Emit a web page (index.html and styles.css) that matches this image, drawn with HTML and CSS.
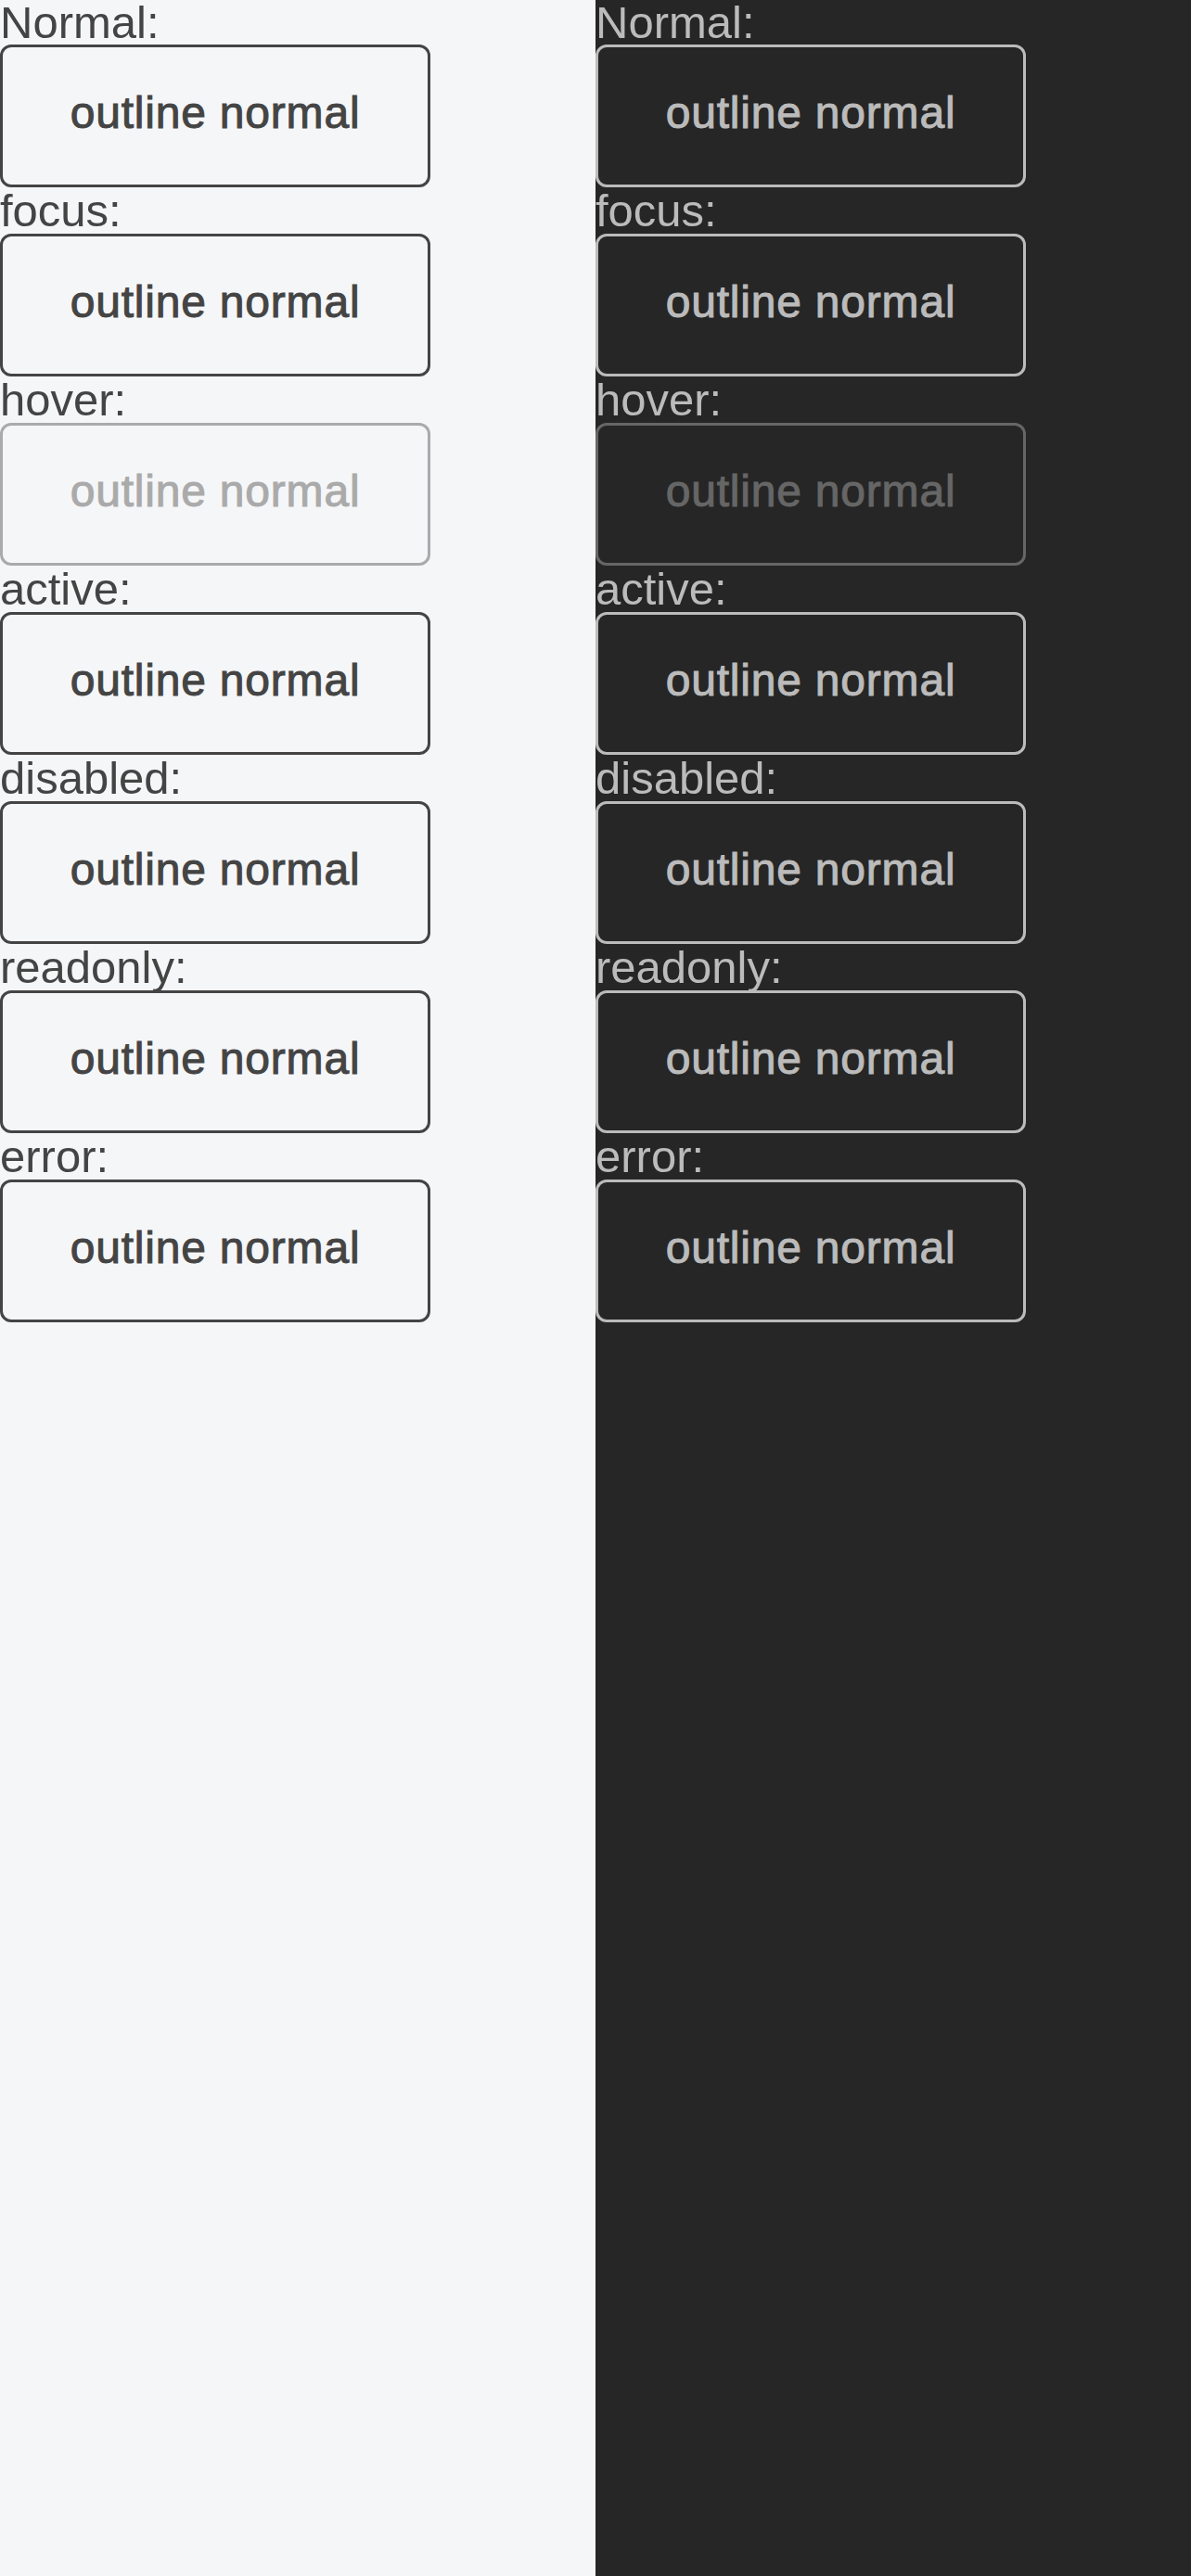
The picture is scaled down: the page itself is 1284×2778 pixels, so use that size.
FILE: index.html
```html
<!DOCTYPE html>
<html lang="en">
<head>
<meta charset="utf-8">
<title>Outline buttons</title>
<link rel="stylesheet" href="styles.css">
</head>
<body>
<div class="page">
  <section class="col light">
    <div class="label">Normal:</div>
    <div class="btn">outline normal</div>
    <div class="label">focus:</div>
    <div class="btn">outline normal</div>
    <div class="label">hover:</div>
    <div class="btn hover">outline normal</div>
    <div class="label">active:</div>
    <div class="btn">outline normal</div>
    <div class="label">disabled:</div>
    <div class="btn">outline normal</div>
    <div class="label">readonly:</div>
    <div class="btn">outline normal</div>
    <div class="label">error:</div>
    <div class="btn">outline normal</div>
  </section>
  <section class="col dark">
    <div class="label">Normal:</div>
    <div class="btn">outline normal</div>
    <div class="label">focus:</div>
    <div class="btn">outline normal</div>
    <div class="label">hover:</div>
    <div class="btn hover">outline normal</div>
    <div class="label">active:</div>
    <div class="btn">outline normal</div>
    <div class="label">disabled:</div>
    <div class="btn">outline normal</div>
    <div class="label">readonly:</div>
    <div class="btn">outline normal</div>
    <div class="label">error:</div>
    <div class="btn">outline normal</div>
  </section>
</div>
</body>
</html>
```
FILE: styles.css
```css
html, body {
  margin: 0;
  padding: 0;
}
body {
  font-family: "Liberation Sans", Arial, sans-serif;
}
.page {
  display: flex;
  width: 1284px;
  height: 2778px;
}
.col {
  width: 642px;
  display: flex;
  flex-direction: column;
  align-items: flex-start;
}
.light {
  background: #f5f6f8;
  --fg: #444444;
  --muted: #aaaaaa;
}
.dark {
  background: #262626;
  --fg: #bbbbbb;
  --muted: #666666;
}
.label {
  height: 50px;
  line-height: 50px;
  font-size: 49px;
  color: var(--fg);
}
.label:first-child {
  height: 48px;
  line-height: 48px;
}
.btn {
  box-sizing: border-box;
  width: 464px;
  height: 154px;
  padding-bottom: 7px;
  border: 3px solid var(--fg);
  border-radius: 12px;
  display: flex;
  align-items: center;
  justify-content: center;
  font-size: 48px;
  font-weight: 400;
  letter-spacing: 0.8px;
  -webkit-text-stroke: 1px currentColor;
  color: var(--fg);
}
.btn.hover {
  border-color: var(--muted);
  color: var(--muted);
}
```
